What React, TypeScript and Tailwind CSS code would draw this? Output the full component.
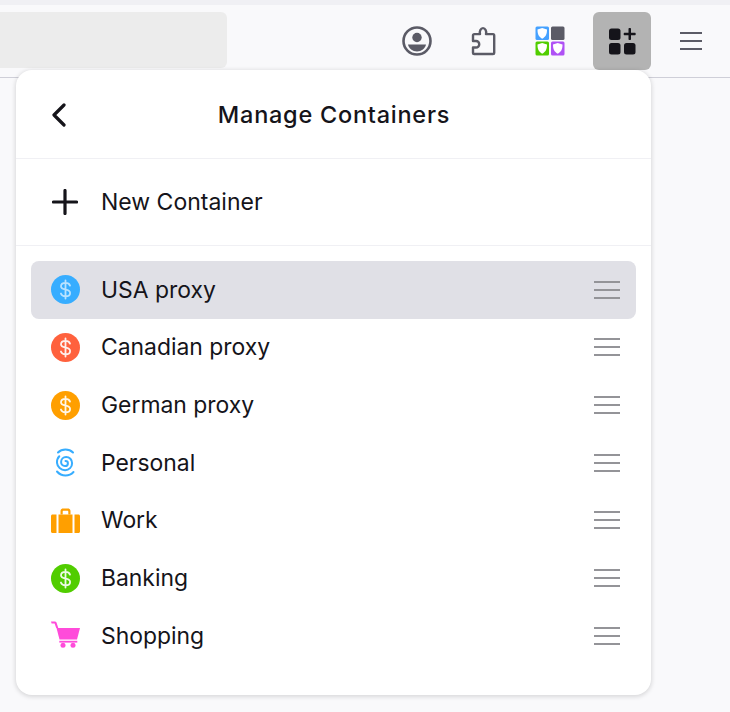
import type { ReactNode } from 'react';

type Container = {
  name: string;
  icon: 'dollar' | 'spiral' | 'briefcase' | 'cart';
  color: string;
  active?: boolean;
};

const containers: Container[] = [
  { name: 'USA proxy', icon: 'dollar', color: '#37adff', active: true },
  { name: 'Canadian proxy', icon: 'dollar', color: '#ff613d' },
  { name: 'German proxy', icon: 'dollar', color: '#ff9f00' },
  { name: 'Personal', icon: 'spiral', color: '#37adff' },
  { name: 'Work', icon: 'briefcase', color: '#ff9f00' },
  { name: 'Banking', icon: 'dollar', color: '#51cd00' },
  { name: 'Shopping', icon: 'cart', color: '#ff4bda' },
];

function ContainerIcon({ icon, color }: { icon: Container['icon']; color: string }) {
  if (icon === 'dollar') {
    return (
      <svg width="29" height="29" viewBox="0 0 29 29" fill="none">
        <circle cx="14.5" cy="14.5" r="14.5" fill={color} />
        <path
          d="M19 10.6c-.6-1.8-2.3-2.7-4.5-2.7-2.6 0-4.5 1.4-4.5 3.4 0 2.2 2 2.9 4.5 3.3 2.6.4 4.6 1.1 4.6 3.3 0 2-1.9 3.4-4.6 3.4-2.3 0-4-1-4.6-2.8M14.5 5.5v18"
          stroke="#fff"
          strokeOpacity={color === '#37adff' ? 0.65 : 0.9}
          strokeWidth="1.8"
          strokeLinecap="round"
        />
      </svg>
    );
  }
  if (icon === 'spiral') {
    return (
      <svg width="29" height="29" viewBox="0 0 29 29" fill="none" stroke={color} strokeWidth="2" strokeLinecap="round">
        <path d="M7 4.500C9 2.500 11.800 1.500 14.500 1.500c2.900 0 5.500 1 7.500 3" />
        <path d="M6 23.500c2.300 2.700 5.300 4 8.500 4 3 0 5.800-1.100 8-3.500" />
        <path d="M14.500 13c1.500 0 2.400 1 2.400 2.200 0 1.700-1.300 2.900-3 2.900-2.200 0-3.800-1.800-3.800-4 0-2.900 2.200-5.100 5-5.100 3.400 0 6 2.700 6 6.200 0 3.900-3 7-7 7-4.200 0-7.700-3.200-8.100-7.300-.2-2.500.7-4.900 2.300-6.600" />
      </svg>
    );
  }
  if (icon === 'briefcase') {
    return (
      <svg width="29" height="29" viewBox="0 0 29 29" fill={color}>
        <path d="M9.500 8.500V5C9.500 3.500 10.500 2.500 12 2.500h5C18.500 2.500 19.500 3.500 19.500 5v3.500h-2.200V5.800c0-.6-.4-1-1-1h-3.600c-.6 0-1 .4-1 1v2.700H9.500Z" />
        <path d="M7.500 8.500h14V27h-14z" />
        <path d="M0 10C0 9.200.7 8.500 1.500 8.500h4V27h-4C.7 27 0 26.300 0 25.500V10ZM23.500 8.500h4c.8 0 1.500.7 1.500 1.500v15.500c0 .8-.7 1.500-1.500 1.500h-4V8.500Z" />
      </svg>
    );
  }
  return (
    <svg width="29" height="29" viewBox="0 0 29 29" fill={color}>
      <path d="M0 .5h3.800c.8 0 1.400.4 1.700 1.100L7.300 7H5.200L3.600 2.400H.6L0 .5Z" />
      <path d="M5.500 7H29l-3 11.500H8.500L5.500 7Z" />
      <path d="M8.300 19.800h18v1.800h-18z" />
      <circle cx="12" cy="24.300" r="2.500" />
      <circle cx="22" cy="24.300" r="2.500" />
    </svg>
  );
}

function DragHandle() {
  return (
    <div className="flex w-[26px] flex-col gap-[6px]">
      <span className="h-[2px] bg-[#949498]" />
      <span className="h-[2px] bg-[#949498]" />
      <span className="h-[2px] bg-[#949498]" />
    </div>
  );
}

function ToolbarButton({ className, children }: { className: string; children: ReactNode }) {
  return (
    <div className={`flex h-[58px] w-[58px] items-center justify-center rounded-[6px] ${className}`}>
      {children}
    </div>
  );
}

export default function App() {
  return (
    <div
      className="relative h-[712px] w-[730px] overflow-hidden bg-[#f9f9fb] text-[#15141a]"
      style={{ fontFamily: 'Inter, "Noto Sans", sans-serif' }}
    >
      <div className="h-[5px] bg-[#f0f0f4]" />
      <div className="flex h-[73px] items-start border-b border-[#cfcfd8] pt-[7px]">
        <div className="h-[56px] w-[227px] rounded-r-[6px] bg-[#ececec]" />
        <ToolbarButton className="ml-[161px]">
          <svg width="30" height="30" viewBox="0 0 30 30" fill="none">
            <circle cx="15" cy="15" r="13.500" stroke="#5b5b66" strokeWidth="2.600" />
            <circle cx="15" cy="11.500" r="4.700" fill="#5b5b66" />
            <path d="M6 18.500h18c-.9 4-4.500 7-9 7s-8.100-3-9-7Z" fill="#5b5b66" />
          </svg>
        </ToolbarButton>
        <ToolbarButton className="ml-[8px]">
          <svg width="26" height="30" viewBox="0 0 26 30" fill="none">
            <path
              d="M3 21.500h3a3.200 3.200 0 0 0 0-6.500H3V9.500c0-.8.600-1.400 1.400-1.400H10c-.8-3 .8-6 3-6s3.800 3 3 6h7c.8 0 1.200.6 1.200 1.400V27c0 .6-.5 1-1.200 1H4.200C3.500 28 3 27.600 3 27v-5.500Z"
              stroke="#5b5b66"
              strokeWidth="2.400"
              strokeLinejoin="round"
            />
          </svg>
        </ToolbarButton>
        <ToolbarButton className="ml-[9px]">
          <svg width="30" height="30" viewBox="0 0 30 30">
            <rect x="0.500" y="0.500" width="13.500" height="13.500" rx="1.500" fill="#45a1ff" />
            <rect x="16" y="0.500" width="13.500" height="13.500" rx="1.500" fill="#5b5b66" />
            <rect x="0.500" y="15.500" width="13.500" height="14" rx="1.500" fill="#51cd00" />
            <rect x="16" y="15.500" width="13.500" height="14" rx="1.500" fill="#af51f5" />
            <path d="M2.500 3.500 7.200 2l4.800 1.500c0 4.700-1.300 7.300-4.800 9.200C3.800 10.800 2.500 8.200 2.500 3.500Z" fill="#fff" />
            <path d="M2.500 18.500l4.700-1.500 4.800 1.500c0 4.700-1.300 7.300-4.800 9.200-3.400-1.900-4.700-4.500-4.700-9.200Z" fill="#fff" />
            <path d="M18 18.500l4.700-1.500 4.800 1.500c0 4.700-1.300 7.300-4.800 9.200-3.400-1.900-4.700-4.500-4.700-9.200Z" fill="#fff" />
          </svg>
        </ToolbarButton>
        <ToolbarButton className="ml-[14px] bg-[#b3b3b3]">
          <svg width="28" height="28" viewBox="0 0 28 28" fill="#15141a">
            <rect x="1" y="1.500" width="11.500" height="11.500" rx="2.500" />
            <rect x="1" y="16" width="11.500" height="11.500" rx="2.500" />
            <rect x="16" y="16" width="11.500" height="11.500" rx="2.500" />
            <path d="M20.500 2c0-.6.400-1 1-1h.500c.6 0 1 .4 1 1v3.700h3.700c.6 0 1 .4 1 1v.500c0 .6-.4 1-1 1H23v3.700c0 .6-.4 1-1 1h-.500c-.6 0-1-.4-1-1V8.200h-3.800c-.6 0-1-.4-1-1v-.500c0-.6.400-1 1-1h3.800V2Z" />
          </svg>
        </ToolbarButton>
        <ToolbarButton className="ml-[11px]">
          <div className="flex w-[22px] flex-col gap-[5.500px]">
            <span className="h-[2.500px] bg-[#5b5b66]" />
            <span className="h-[2.500px] bg-[#5b5b66]" />
            <span className="h-[2.500px] bg-[#5b5b66]" />
          </div>
        </ToolbarButton>
      </div>

      {/* menu panel hangs over the toolbar */}
      <div className="absolute left-[16px] top-[70px] flex h-[625px] w-[635px] flex-col rounded-[16px] bg-white shadow-[0_1px_4px_1px_rgba(0,0,0,0.13)]">
        <div className="relative flex h-[89px] items-center justify-center border-b border-[#f0f0f4]">
          <svg className="absolute left-[35px] top-[33px]" width="16" height="24" viewBox="0 0 16 24" fill="none">
            <path d="M13 2 3 12l10 10" stroke="#15141a" strokeWidth="3.200" strokeLinecap="round" strokeLinejoin="round" />
          </svg>
          <h1 className="pl-[1px] pt-[1px] text-[23.500px] font-medium tracking-[0.75px]">Manage Containers</h1>
        </div>
        <div className="flex h-[87px] items-center border-b border-[#f0f0f4] pl-[36px]">
          <svg width="26" height="26" viewBox="0 0 26 26" fill="none">
            <path d="M13 1.500v23M1.500 13h23" stroke="#15141a" strokeWidth="3.200" strokeLinecap="round" />
          </svg>
          <span className="ml-[23px] pt-[1px] text-[23px]">New Container</span>
        </div>
        <ul className="flex flex-col px-[15px] pt-[15px]">
          {containers.map((c) => (
            <li
              key={c.name}
              className={`flex h-[57.660px] items-center rounded-[8px] pl-[20px] pr-[16px] ${c.active ? 'bg-[#e0e0e6]' : ''}`}
            >
              <ContainerIcon icon={c.icon} color={c.color} />
              <span className="ml-[21px] flex-1 text-[22.900px]">{c.name}</span>
              <DragHandle />
            </li>
          ))}
        </ul>
      </div>
    </div>
  );
}
